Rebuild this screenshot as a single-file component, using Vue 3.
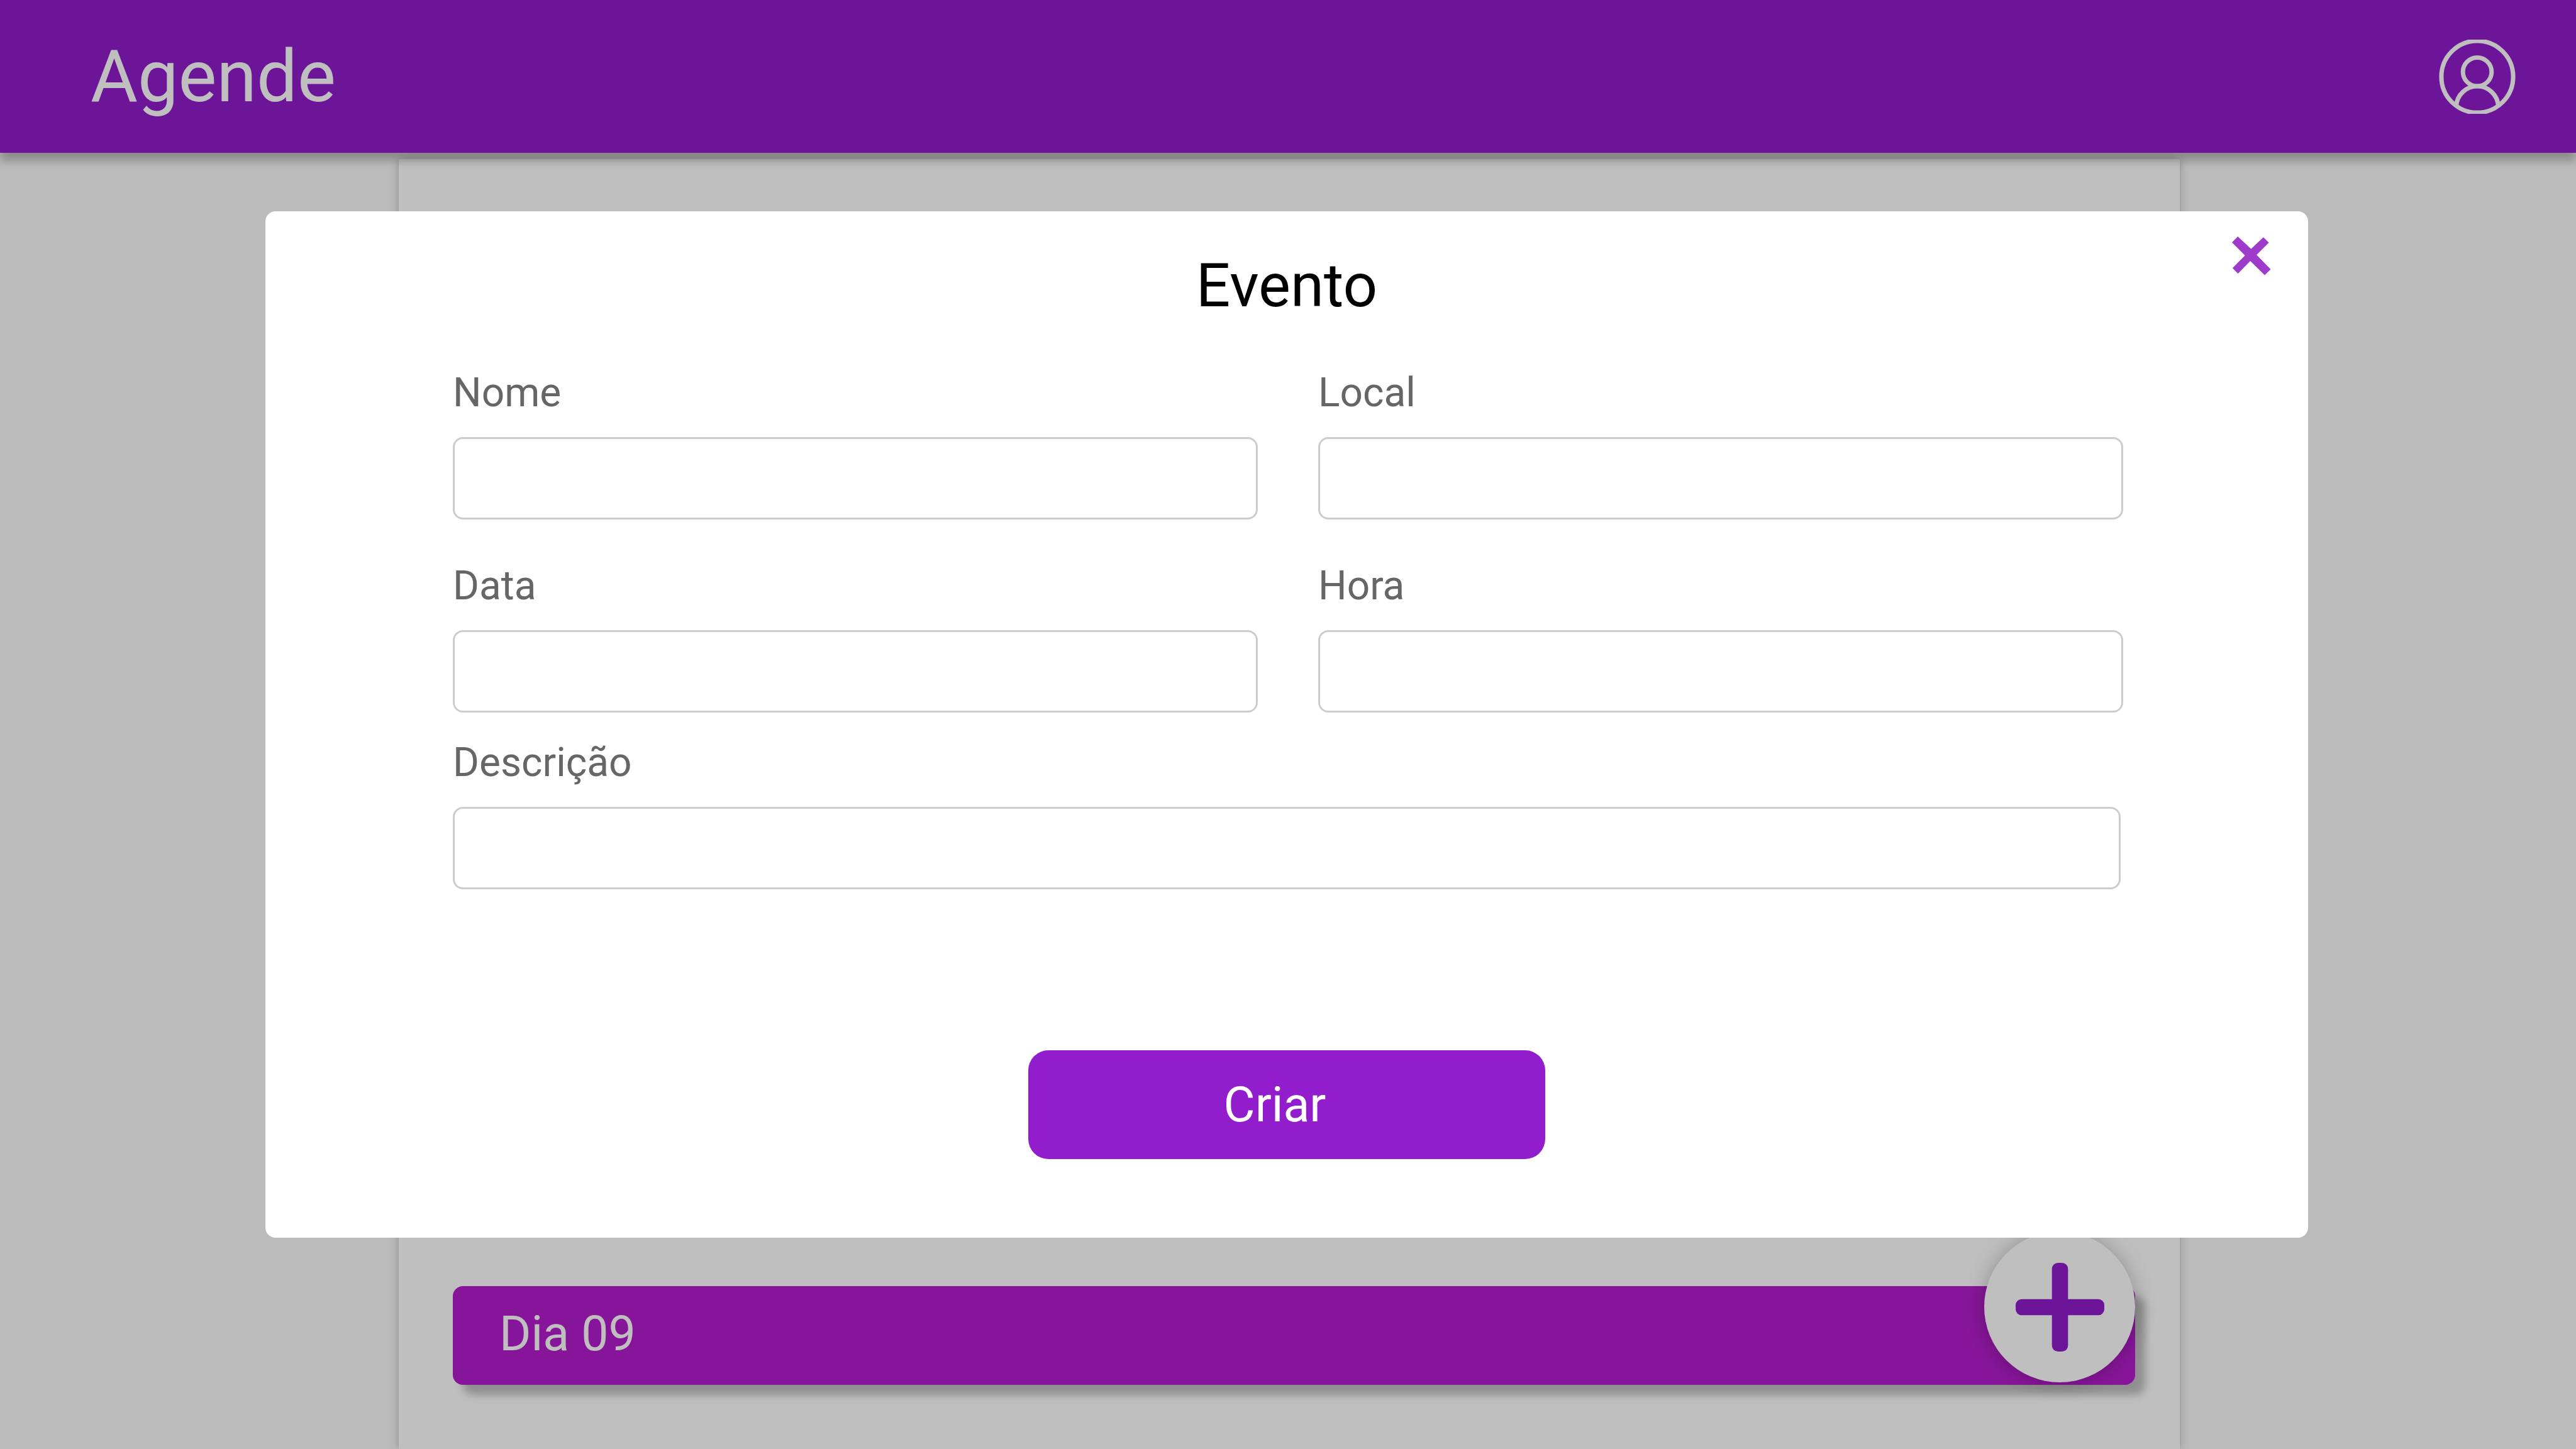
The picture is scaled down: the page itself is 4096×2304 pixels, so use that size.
<script setup>
import { reactive } from 'vue'

const evento = reactive({ nome: '', local: '', data: '', hora: '', descricao: '' })

const campos = [
  { id: 'nome', label: 'Nome' },
  { id: 'local', label: 'Local' },
  { id: 'data', label: 'Data' },
  { id: 'hora', label: 'Hora' }
]
</script>

<template>
  <div class="page">
    <header class="topbar">
      <h1 class="brand">Agende</h1>
      <button class="icon-button" type="button" aria-label="Perfil">
        <svg class="user-icon" viewBox="0 0 152 148" fill="none" stroke="#fff" stroke-width="8.8">
          <circle cx="76" cy="74" r="71.6" />
          <circle cx="76" cy="64.3" r="28.6" />
          <path d="M34.1 132A42 42 0 0 1 117.9 132" />
        </svg>
      </button>
    </header>

    <main class="agenda">
      <section class="day">
        <h2 class="day-title">Dia 09</h2>
      </section>
    </main>

    <button class="fab" type="button" aria-label="Adicionar evento">
      <svg class="plus-icon" viewBox="0 0 176 176" fill="#921dcc">
        <rect x="72" y="0" width="32" height="176" rx="12" />
        <rect x="0" y="72" width="176" height="32" rx="12" />
      </svg>
    </button>

    <div class="overlay">
      <div class="modal" role="dialog" aria-modal="true" aria-labelledby="modal-title">
        <div class="modal-head">
          <h2 id="modal-title" class="modal-title">Evento</h2>
          <button class="icon-button close" type="button" aria-label="Fechar">
            <svg class="close-icon" viewBox="0 0 78 78" fill="#9f3bca">
              <path d="M11.5 0L38.2 24.9L62.8 1.6L73.7 12.3L49.2 36.8L77.4 65.6L65.4 77.5L36.6 49L12 74.3L1 63.3L26.1 38L0 12Z" />
            </svg>
          </button>
        </div>

        <form class="form" @submit.prevent>
          <div class="grid">
            <div v-for="campo in campos" :key="campo.id" class="field">
              <label class="label" :for="campo.id">{{ campo.label }}</label>
              <input :id="campo.id" v-model="evento[campo.id]" class="input" type="text" />
            </div>
          </div>
          <div class="field">
            <label class="label" for="descricao">Descrição</label>
            <input id="descricao" v-model="evento.descricao" class="input" type="text" />
          </div>
          <button class="submit" type="submit">Criar</button>
        </form>
      </div>
    </div>
  </div>
</template>

<style>
body {
  margin: 0;
}
</style>

<style scoped>
.page {
  position: relative;
  display: flex;
  flex-direction: column;
  min-height: 100vh;
  overflow: hidden;
  background: #fafafa;
  font-family: Roboto, "Liberation Sans", sans-serif;
}

h1,
h2 {
  margin: 0;
  font-weight: 400;
}

button {
  border: 0;
  padding: 0;
  font-family: inherit;
  cursor: pointer;
}

svg {
  display: block;
}

.icon-button {
  background: none;
}

/* Positioned so that its shadow falls on the agenda panel below */
.topbar {
  position: relative;
  display: flex;
  align-items: center;
  justify-content: space-between;
  height: 243px;
  padding: 0 96px 0 144px;
  background: #921dcc;
  box-shadow: 0 13px 13px rgba(0, 0, 0, 0.25);
}

.brand {
  color: #fff;
  font-size: 115px;
  line-height: 136px;
}

.user-icon {
  width: 122px;
  height: 118px;
}

.agenda {
  flex: 1;
  display: flex;
  flex-direction: column;
  justify-content: flex-end;
  margin: 10px 630px 0 634px;
  padding: 0 71px 102px 86px;
  background: #fff;
  box-shadow: 0 0 13px rgba(0, 0, 0, 0.25);
}

.day {
  box-sizing: border-box;
  display: flex;
  align-items: center;
  height: 157px;
  padding: 0 74px 6px;
  border-radius: 16px;
  background: #b41dcc;
  box-shadow: 16px 16px 13px rgba(0, 0, 0, 0.25);
}

.day-title {
  color: #fff;
  font-size: 77px;
  line-height: 90px;
}

.fab {
  position: absolute;
  right: 701px;
  bottom: 106px;
  display: flex;
  align-items: center;
  justify-content: center;
  width: 240px;
  height: 240px;
  border-radius: 50%;
  background: #fff;
  box-shadow: 0 0 32px rgba(0, 0, 0, 0.25);
}

.plus-icon {
  width: 141px;
  height: 141px;
}

.overlay {
  position: absolute;
  inset: 0;
  padding: 336px 426px 0 422px;
  background: rgba(0, 0, 0, 0.25);
}

.modal {
  border-radius: 16px;
  background: #fff;
}

.modal-head {
  display: grid;
  grid-template-columns: 1fr auto 1fr;
  align-items: start;
  padding: 40px 59px 0;
}

.modal-title {
  grid-column: 2;
  padding-top: 22px;
  color: #000;
  font-size: 96px;
  line-height: 112px;
}

.close {
  justify-self: end;
}

.close-icon {
  width: 62px;
  height: 62px;
}

.form {
  display: flex;
  flex-direction: column;
  padding: 77px 298px 125px;
}

.grid {
  display: grid;
  grid-template-columns: 1fr 1fr;
  gap: 68px 96px;
  margin: 0 -4px 42px 0;
}

.field {
  display: flex;
  flex-direction: column;
  gap: 32px;
}

.label {
  color: #666;
  font-size: 64px;
  line-height: 76px;
}

.input {
  box-sizing: border-box;
  width: 100%;
  height: 131px;
  padding: 0 32px;
  border: 3px solid #ccc;
  border-radius: 16px;
  background: #fff;
  color: #333;
  font-family: inherit;
  font-size: 64px;
  outline: none;
}

.submit {
  align-self: center;
  width: 822px;
  height: 173px;
  margin-top: 256px;
  padding-right: 38px;
  border-radius: 32px;
  background: #921dcc;
  color: #fff;
  font-size: 77px;
  line-height: 90px;
}
</style>
